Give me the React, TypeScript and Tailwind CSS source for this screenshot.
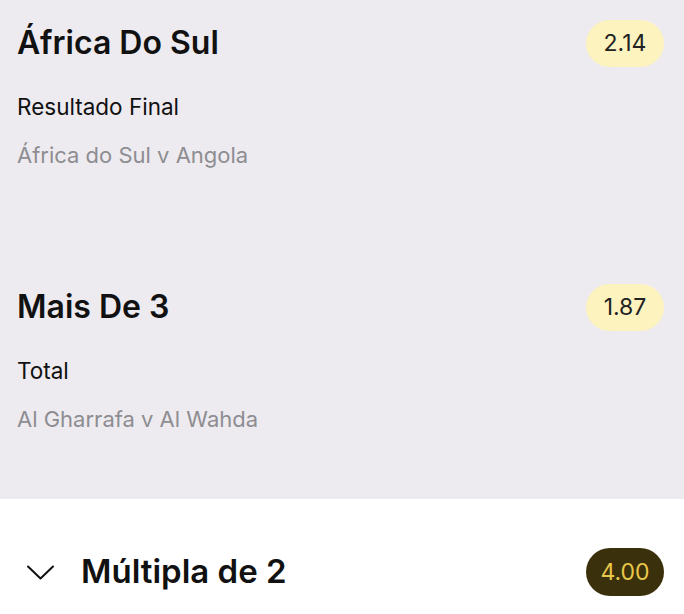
interface Selection {
  pick: string;
  market: string;
  event: string;
  odds: string;
}

const selections: Selection[] = [
  { pick: "África Do Sul", market: "Resultado Final", event: "África do Sul v Angola", odds: "2.14" },
  { pick: "Mais De 3", market: "Total", event: "Al Gharrafa v Al Wahda", odds: "1.87" },
];

function SelectionItem({ pick, market, event, odds }: Selection) {
  return (
    <div className="pl-[17px] pr-[20px] pt-[23px] pb-[93px] last:pb-[64px]">
      <div className="flex items-center justify-between h-10">
        <h2 className="text-[32px] font-semibold leading-10 text-[#111]">{pick}</h2>
        <span className="flex items-center justify-center w-[78px] h-[47px] rounded-full bg-[#fcf3bf] text-[23px] text-[#222]">
          {odds}
        </span>
      </div>
      <p className="mt-[28px] text-[22.5px] leading-8 text-[#111]">{market}</p>
      <p className="mt-[16px] text-[22px] leading-8 text-[#8e8d92]">{event}</p>
    </div>
  );
}

export default function App() {
  return (
    <div className="w-[684px] h-[614px] overflow-hidden bg-white" style={{ fontFamily: "Inter, 'Noto Sans', sans-serif" }}>
      <div className="bg-[#edebef]">
        {selections.map((s) => (
          <SelectionItem key={s.pick} {...s} />
        ))}
      </div>
      <div className="flex items-center justify-between pl-[27px] pr-[20px] pt-[49px]">
        <div className="flex items-center gap-[27px] h-[48px]">
          <svg width="27" height="15" viewBox="0 0 27 15" fill="none" className="text-[#111]">
            <path d="M1 1.5 L13.5 13.5 L26 1.5" stroke="currentColor" strokeWidth="2" strokeLinecap="round" strokeLinejoin="round" />
          </svg>
          <span className="text-[33px] font-semibold text-[#111]">Múltipla de 2</span>
        </div>
        <span className="flex items-center justify-center w-[78px] h-[48px] rounded-full bg-[#3b300c] text-[23px] text-[#e8c74a]">
          4.00
        </span>
      </div>
    </div>
  );
}
